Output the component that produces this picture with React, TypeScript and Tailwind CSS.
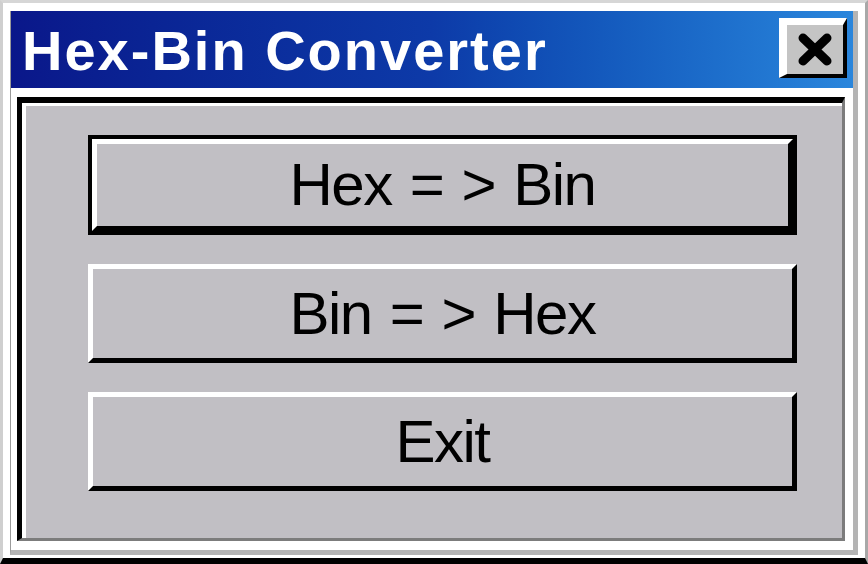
import React from 'react';

const buttons = [
  { label: 'Hex = > Bin', isDefault: true },
  { label: 'Bin = > Hex', isDefault: false },
  { label: 'Exit', isDefault: false },
];

const CloseIcon = () => (
  <svg width="36" height="33" viewBox="0 0 36 33">
    <line x1="6" y1="5" x2="30" y2="28" stroke="#000" strokeWidth="9" strokeLinecap="round" />
    <line x1="30" y1="5" x2="6" y2="28" stroke="#000" strokeWidth="9" strokeLinecap="round" />
  </svg>
);

const DialogButton: React.FC<{ label: string; isDefault: boolean }> = ({ label, isDefault }) => {
  const face = (
    <div className="flex-1 flex items-center justify-center bg-[#c1bfc4] border-t-[5px] border-l-[5px] border-t-white border-l-white border-r-[5px] border-b-[5px] border-r-black border-b-black">
      <span className="text-[60px] leading-none tracking-[-1.5px] [word-spacing:3px] text-black">
        {label}
      </span>
    </div>
  );

  if (isDefault) {
    return (
      <div className="h-[100px] flex border-[4px] border-black">
        {face}
      </div>
    );
  }

  return <div className="h-[99px] flex">{face}</div>;
};

export default function App() {
  return (
    <div
      className="w-[868px] h-[564px] flex flex-col bg-white border-l-[3px] border-t-[3px] border-r-[3px] border-b-[6px] border-l-[#cfcfcf] border-t-[#d6d6d6] border-r-[#a8a8a8] border-b-black pl-[7px] pr-[7px] pt-[8px] pb-[3px]"
      style={{ fontFamily: '"Liberation Sans", Arial, sans-serif' }}
    >
      <div className="flex-1 flex flex-col border-l border-l-[#9a9a9a] border-r-[5px] border-b-[5px] border-r-[#b4b4b4] border-b-[#b4b4b4]">
        {/* title bar */}
        <div className="h-[77px] flex items-start justify-between bg-linear-to-r from-[#0a178a] via-[#0d3aa8] to-[#2a86dc] pl-[11px] pr-[6px]">
          <span className="mt-[12px] text-[56px] leading-none font-bold tracking-[2px] text-white">
            Hex-Bin Converter
          </span>
          <div className="mt-[7px] w-[68px] h-[60px] flex items-center justify-center bg-[#c4c4c4] border-t-[7px] border-l-[8px] border-t-white border-l-white border-r-[4px] border-b-[4px] border-r-black border-b-black">
            <CloseIcon />
          </div>
        </div>

        {/* body */}
        <div className="flex-1 flex bg-white pt-[9px] pl-[6px] pr-[8px] pb-[9px]">
          <div className="flex-1 flex border-t-[6px] border-l-[5px] border-t-black border-l-black border-r-[3px] border-b-[3px] border-r-[#7c7c7c] border-b-[#7c7c7c]">
            <div className="flex-1 flex flex-col gap-[29px] bg-[#c1bfc4] border-t-[3px] border-l-[4px] border-t-white border-l-white pl-[62px] pr-[45px] pt-[29px]">
              {buttons.map((b) => (
                <DialogButton key={b.label} label={b.label} isDefault={b.isDefault} />
              ))}
            </div>
          </div>
        </div>
      </div>
    </div>
  );
}
